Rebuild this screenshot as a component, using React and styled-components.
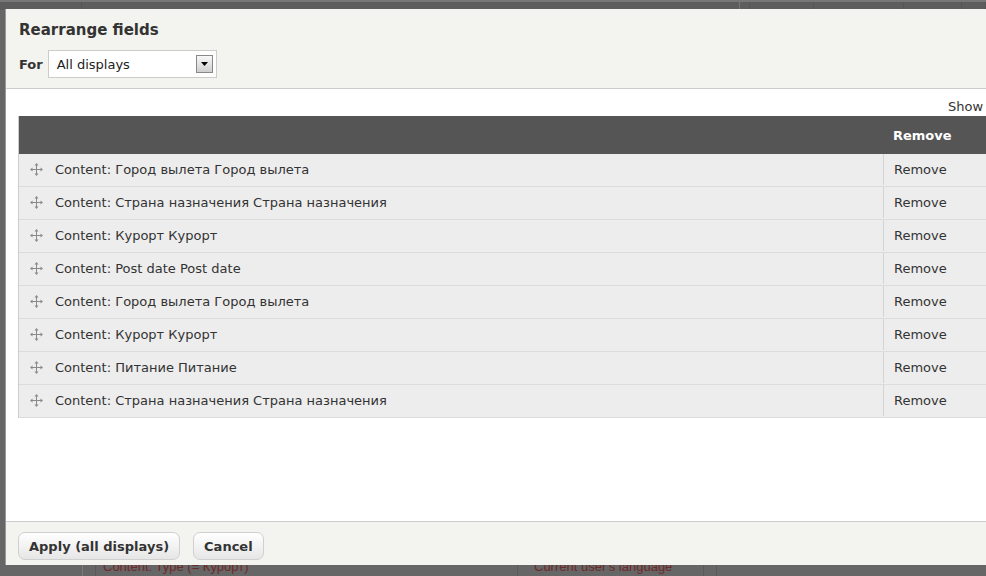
import React from "react";
import styled, { createGlobalStyle } from "styled-components";

const Global = createGlobalStyle`
  html, body { margin: 0; padding: 0; }
  body {
    width: 986px;
    height: 576px;
    overflow: hidden;
    background: #666;
    font-family: "DejaVu Sans", Verdana, sans-serif;
  }
`;

const Page = styled.div`
  position: relative;
  width: 986px;
  height: 576px;
  overflow: hidden;
  background: #666;
`;

const BehindTop = styled.div`
  height: 8px;
  background: #5d5d5d;
  border-top: 2px solid #777;
  display: flex;
`;

const BehindCol = styled.div`
  width: ${(p) => p.$w}px;
  flex: ${(p) => (p.$w ? "none" : "1")};
  box-sizing: border-box;
  border-right: 1px solid ${(p) => p.$line || "#555"};
`;

const BehindBottom = styled.div`
  position: absolute;
  left: 0;
  right: 0;
  bottom: 0;
  height: 24px;
  display: flex;
`;

const BehindCell = styled.div`
  width: ${(p) => p.$w}px;
  flex: ${(p) => (p.$w ? "none" : "1")};
  box-sizing: border-box;
  border-left: 1px solid ${(p) => p.$line || "#5a5a5a"};
  padding-left: ${(p) => p.$pad || 0}px;
  font-family: "Liberation Sans", Arial, sans-serif;
  font-size: 13px;
  color: #6e2a2a;
  line-height: 15px;
  padding-top: 7px;
  white-space: nowrap;
`;

const Dialog = styled.div`
  position: absolute;
  left: 5px;
  top: 9px;
  width: 1100px;
  height: 556px;
  background: #fff;
  border-left: 1px solid #999;
  display: flex;
  flex-direction: column;
  box-sizing: border-box;
  color: #333;
`;

const Header = styled.div`
  background: #f3f3ef;
  border-bottom: 1px solid #ccc;
  padding: 11px 13px 10px 13px;
  display: flex;
  flex-direction: column;
  gap: 10px;
`;

const Title = styled.h1`
  margin: 0;
  font-size: 15px;
  line-height: 20px;
  font-weight: bold;
  color: #333;
`;

const ForRow = styled.div`
  display: flex;
  align-items: center;
  gap: 5px;
`;

const Label = styled.label`
  font-weight: bold;
  font-size: 13px;
  color: #333;
`;

const Select = styled.div`
  width: 169px;
  height: 28px;
  box-sizing: border-box;
  background: #fff;
  border: 1px solid #ccc;
  display: flex;
  align-items: center;
  justify-content: space-between;
  padding: 0 3px 0 8px;
  font-size: 13px;
  color: #222;
`;

const SelectButton = styled.span`
  width: 17px;
  height: 18px;
  box-sizing: border-box;
  border: 1px solid #888;
  background: linear-gradient(#f8f8f8, #cfcfcf);
  display: flex;
  align-items: center;
  justify-content: center;
`;

const Content = styled.div`
  flex: 1;
  padding: 9px 0 0 12px;
  display: flex;
  flex-direction: column;
`;

const TableWrap = styled.div`
  width: 1050px;
  display: flex;
  flex-direction: column;
`;

const ShowLink = styled.div`
  align-self: flex-end;
  font-size: 13px;
  line-height: 18px;
  color: #333;
  width: 120px;
  white-space: nowrap;
`;

const Table = styled.div`
  display: flex;
  flex-direction: column;
  border-left: 1px solid #ccc;
`;

const HeadRow = styled.div`
  display: flex;
  height: 38px;
  background: #555;
  color: #fff;
  font-weight: bold;
  font-size: 13px;
  align-items: center;
`;

const Row = styled.div`
  display: flex;
  height: 33px;
  box-sizing: border-box;
  background: #ededed;
  border-bottom: 1px solid #dcdcdc;
  padding-bottom: 1px;
  font-size: 13px;
  color: #333;
`;

const NameCell = styled.div`
  flex: 1;
  display: flex;
  align-items: center;
  gap: 12px;
  padding-left: 11px;
`;

const RemoveCell = styled.div`
  width: 185px;
  box-sizing: border-box;
  padding-left: 10px;
  display: flex;
  align-items: center;
  border-left: ${(p) => (p.$head ? "none" : "1px solid #d4d4d4")};
`;

const Footer = styled.div`
  background: #f3f3ef;
  border-top: 1px solid #ccc;
  height: 44px;
  box-sizing: border-box;
  padding: 10px 12px 0 12px;
  display: flex;
  gap: 13px;
  align-items: flex-start;
`;

const Button = styled.button`
  height: 28px;
  box-sizing: border-box;
  padding: 0 10px;
  border: 1px solid #d0d0d0;
  border-radius: 7px;
  background: linear-gradient(#ffffff, #e6e6e6);
  font-family: "DejaVu Sans", Verdana, sans-serif;
  font-weight: bold;
  font-size: 13px;
  color: #333;
  cursor: pointer;
`;

const DragIcon = () => (
  <svg width="13" height="13" viewBox="0 0 13 13" fill="#8a8a8a">
    <rect x="6" y="2" width="1" height="9" />
    <rect x="2" y="6" width="9" height="1" />
    <polygon points="6.5,0 4.5,2.5 8.5,2.5" />
    <polygon points="6.5,13 4.5,10.5 8.5,10.5" />
    <polygon points="0,6.5 2.5,4.5 2.5,8.5" />
    <polygon points="13,6.5 10.5,4.5 10.5,8.5" />
  </svg>
);

const rows = [
  "Content: Город вылета Город вылета",
  "Content: Страна назначения Страна назначения",
  "Content: Курорт Курорт",
  "Content: Post date Post date",
  "Content: Город вылета Город вылета",
  "Content: Курорт Курорт",
  "Content: Питание Питание",
  "Content: Страна назначения Страна назначения",
];

export default function App() {
  return (
    <Page>
      <Global />
      <BehindTop>
        <BehindCol $w={82} />
        <BehindCol $w={658} $line="#777" />
        <BehindCol $w={10} />
        <BehindCol $w={64} />
        <BehindCol $w={90} />
        <BehindCol $w={58} />
        <BehindCol />
      </BehindTop>
      <BehindBottom>
        <BehindCell $w={82} $line="transparent" />
        <BehindCell $w={13} $line="#7a7a7a" />
        <BehindCell $w={422} $pad={7}>Content: Type (= Курорт)</BehindCell>
        <BehindCell $w={186} $pad={16}>Current user's language</BehindCell>
        <BehindCell $w={13} />
        <BehindCell />
      </BehindBottom>
      <Dialog>
        <Header>
          <Title>Rearrange fields</Title>
          <ForRow>
            <Label>For</Label>
            <Select>
              All displays
              <SelectButton>
                <svg width="7" height="4" viewBox="0 0 7 4">
                  <polygon points="0,0 7,0 3.5,4" fill="#000" />
                </svg>
              </SelectButton>
            </Select>
          </ForRow>
        </Header>
        <Content>
          <TableWrap>
            <ShowLink>Show row weights</ShowLink>
            <Table>
              <HeadRow>
                <NameCell />
                <RemoveCell $head>Remove</RemoveCell>
              </HeadRow>
              {rows.map((r, i) => (
                <Row key={i}>
                  <NameCell>
                    <DragIcon />
                    {r}
                  </NameCell>
                  <RemoveCell>Remove</RemoveCell>
                </Row>
              ))}
            </Table>
          </TableWrap>
        </Content>
        <Footer>
          <Button>Apply (all displays)</Button>
          <Button>Cancel</Button>
        </Footer>
      </Dialog>
    </Page>
  );
}
